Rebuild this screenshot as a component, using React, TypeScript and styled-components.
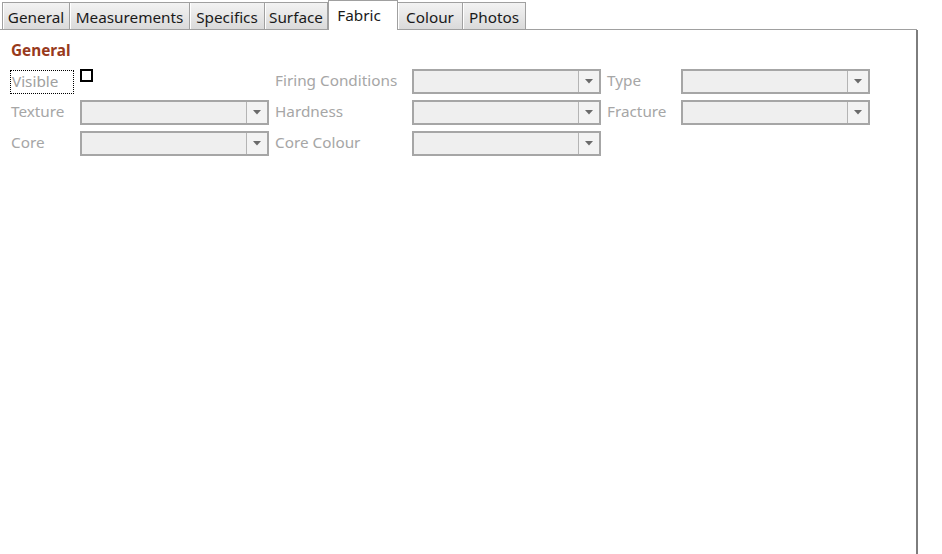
import React from "react";
import styled, { createGlobalStyle } from "styled-components";

const Global = createGlobalStyle`
  html, body { margin: 0; padding: 0; background: #ffffff; }
  body { font-family: "Noto Sans", "Open Sans", sans-serif; }
`;

const Page = styled.div`
  width: 942px;
  height: 554px;
  overflow: hidden;
  background: #ffffff;
  display: flex;
  flex-direction: column;
`;

const TabStrip = styled.div`
  display: flex;
  align-items: flex-end;
  height: 30px;
  padding-left: 2px;
  width: 917px;
  box-sizing: border-box;
  border-bottom: 1px solid #a0a0a0;
`;

const Tab = styled.div<{ $w: number; $active?: boolean; $first?: boolean }>`
  box-sizing: border-box;
  width: ${(p) => p.$w}px;
  height: ${(p) => (p.$active ? 30 : 27)}px;
  margin-bottom: ${(p) => (p.$active ? -1 : 0)}px;
  border: 1px solid #a0a0a0;
  border-left-width: ${(p) => (p.$first || p.$active ? 1 : 0)}px;
  border-bottom: none;
  background: ${(p) =>
    p.$active ? "#ffffff" : "linear-gradient(#f3f3f3, #dadada)"};
  color: #1a1a1a;
  font-size: 15.3px;
  padding-top: 2px;
  padding-right: ${(p) => (p.$active ? 8 : 0)}px;
  line-height: 24px;
  text-align: center;
  white-space: nowrap;
  overflow: hidden;
  box-shadow: ${(p) => (p.$active ? "none" : "inset 1px 0 0 #ffffff")};
`;

const Panel = styled.div`
  flex: 1;
  width: 918px;
  box-sizing: border-box;
  border-right: 2px solid #7d7d7d;
  padding: 10px 0 0 10px;
`;

const Heading = styled.div`
  font-size: 15.3px;
  font-weight: 700;
  color: #983a1c;
  line-height: 20px;
  padding-left: 1px;
  height: 20px;
`;

const Grid = styled.div`
  margin-top: 9px;
  display: grid;
  grid-template-columns: 70px 189px 143px 189px 80px 189px;
  grid-auto-rows: 25px;
  row-gap: 6px;
`;

const Label = styled.div<{ $pad?: number }>`
  font-size: 15.3px;
  color: #a6a6a6;
  line-height: 23px;
  padding-left: ${(p) => p.$pad ?? 1}px;
  white-space: nowrap;
`;

const FocusLabel = styled.div`
  display: flex;
  align-items: center;
`;

const FocusBox = styled.span`
  box-sizing: border-box;
  height: 24px;
  width: 64px;
  border: 1px dotted #000000;
  font-size: 15.3px;
  color: #a0a0a0;
  line-height: 20px;
  padding-left: 1px;
`;

const CheckCell = styled.div`
  display: flex;
  align-items: flex-start;
`;

const Check = styled.span`
  display: block;
  box-sizing: border-box;
  width: 13px;
  height: 13px;
  border: 2px solid #000000;
  background: #ffffff;
`;

const Combo = styled.div`
  box-sizing: border-box;
  height: 25px;
  border: 2px solid #a6a6a6;
  background: #efefef;
  display: flex;
  justify-content: flex-end;
`;

const ComboButton = styled.div`
  width: 20px;
  border-left: 1px solid #b4b4b4;
  background: #f3f3f3;
  display: flex;
  align-items: center;
  justify-content: center;
`;

const Arrow = () => (
  <svg width="8" height="5" viewBox="0 0 8 5">
    <path d="M0 0 H8 L4 4.5 Z" fill="#6b6b6b" />
  </svg>
);

const Drop = () => (
  <Combo>
    <ComboButton>
      <Arrow />
    </ComboButton>
  </Combo>
);

const Empty = styled.div``;

const tabs = [
  { t: "General", w: 68 },
  { t: "Measurements", w: 120 },
  { t: "Specifics", w: 75 },
  { t: "Surface", w: 63 },
  { t: "Fabric", w: 70, active: true },
  { t: "Colour", w: 65 },
  { t: "Photos", w: 63 },
];

export default function App() {
  return (
    <Page>
      <Global />
      <TabStrip>
        {tabs.map((tb, i) => (
          <Tab key={tb.t} $w={tb.w} $active={tb.active} $first={i === 0}>
            {tb.t}
          </Tab>
        ))}
      </TabStrip>
      <Panel>
        <Heading>General</Heading>
        <Grid>
          <FocusLabel>
            <FocusBox>Visible</FocusBox>
          </FocusLabel>
          <CheckCell>
            <Check />
          </CheckCell>
          <Label $pad={6}>Firing Conditions</Label>
          <Drop />
          <Label $pad={6}>Type</Label>
          <Drop />

          <Label>Texture</Label>
          <Drop />
          <Label $pad={6}>Hardness</Label>
          <Drop />
          <Label $pad={6}>Fracture</Label>
          <Drop />

          <Label>Core</Label>
          <Drop />
          <Label $pad={6}>Core Colour</Label>
          <Drop />
          <Empty />
          <Empty />
        </Grid>
      </Panel>
    </Page>
  );
}
